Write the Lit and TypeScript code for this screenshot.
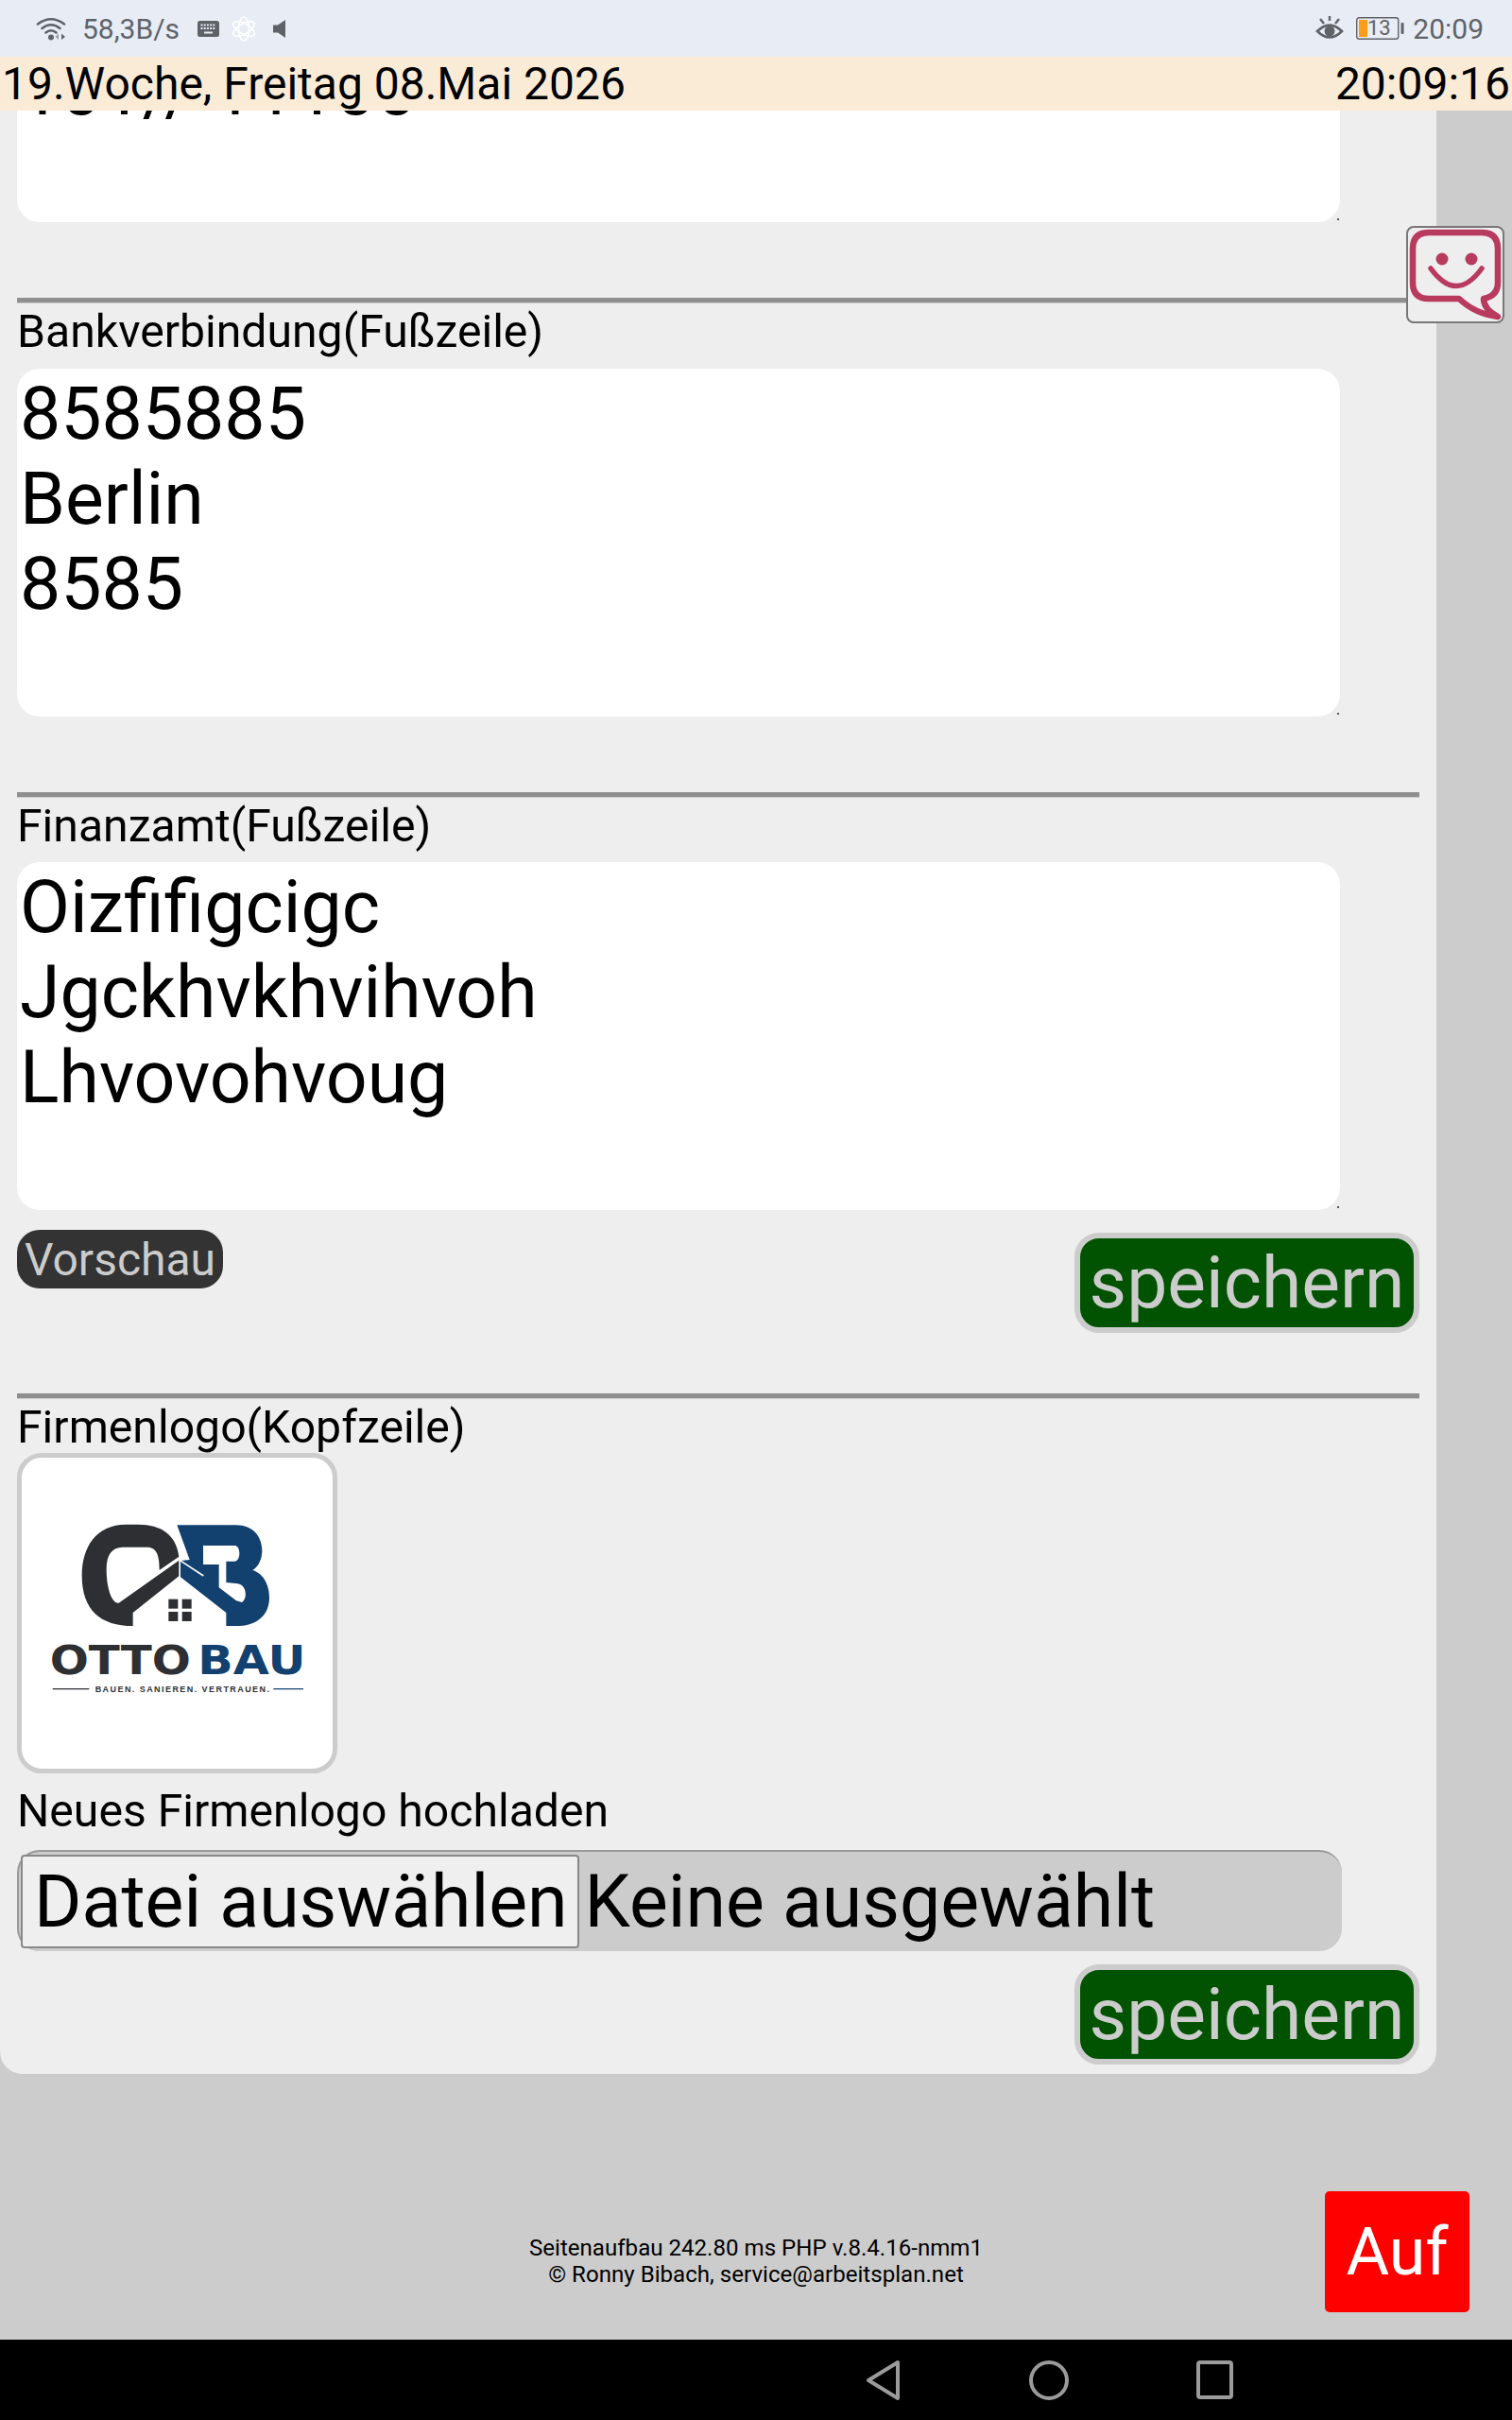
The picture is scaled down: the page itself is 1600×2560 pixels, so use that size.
import { LitElement, css, html, svg } from "lit";
import { customElement } from "lit/decorators.js";

const logo = svg`
  <g fill="#2e2f33">
    <path d="M478 200C470 130 420 98 350 98L310 98C215 98 170 170 170 260C170 370 230 420 332 420L332 378L478 262L478 212L287 347C265 350 248 300 248 240C248 195 265 170 300 170L375 170C405 170 416 190 416 243Z"/>
    <rect x="445" y="335" width="30" height="30"/>
    <rect x="488" y="335" width="30" height="30"/>
    <rect x="445" y="375" width="30" height="30"/>
    <rect x="488" y="375" width="30" height="30"/>
  </g>
  <g transform="translate(450 60)">
    <path fill="#12406f" fill-rule="evenodd" d="M22 40L210 40C270 40 292 85 292 120C292 150 280 172 262 183C300 195 315 235 315 270C315 330 270 360 215 360L178 360L178 318L33 205L33 153L62 150ZM105 105L105 165L155 165L155 238L210 280L228 285C245 275 245 232 215 226L178 222L178 155L205 155C225 155 225 105 205 105Z"/>
    <path stroke="#fff" stroke-width="5" fill="none" d="M30 151L106 201"/>
  </g>
  <text class="wordmark" x="68" y="572" fill="#2e2f33" textLength="448" lengthAdjust="spacingAndGlyphs">OTTO</text>
  <text class="wordmark" x="538" y="572" fill="#12406f" textLength="342" lengthAdjust="spacingAndGlyphs">BAU</text>
  <text class="tagline" x="212" y="630" fill="#2e2f33" textLength="553">BAUEN. SANIEREN. VERTRAUEN.</text>
  <path d="M77 620H193" stroke="#2e2f33" stroke-width="4"/>
  <path d="M778 620H873" stroke="#12406f" stroke-width="4"/>
`;

@customElement("app-root")
export class AppRoot extends LitElement {
  static override styles = css`
    :host {
      display: flex;
      flex-direction: column;
      height: 2560px;
      font-family: Roboto, sans-serif;
      color: #000;
      background: #ccc;
      overflow: hidden;
    }

    .status {
      height: 60px;
      flex: none;
      display: flex;
      align-items: center;
      justify-content: space-between;
      background: #e8ecf5;
      color: #5f6368;
      font-size: 30px;
      padding: 0 30px 0 38px;
    }
    .status-side {
      display: flex;
      align-items: center;
    }
    .status svg {
      display: block;
      flex: none;
    }
    .net {
      margin: 0 19px 0 17px;
    }
    .ai {
      margin: 0 17px 0 12px;
    }
    .eye {
      margin-right: 13px;
    }
    .battery {
      margin-right: 9px;
    }

    .datebar {
      height: 57px;
      flex: none;
      display: flex;
      justify-content: space-between;
      align-items: center;
      padding: 0 2px;
      background: #faebd7;
      font-size: 48px;
      line-height: 57px;
      position: relative;
      z-index: 2;
    }

    .main {
      flex: 1;
      min-height: 0;
      position: relative;
      overflow: hidden;
      display: flex;
      flex-direction: column;
    }

    .panel {
      width: 1520px;
      box-sizing: border-box;
      margin-top: -250px;
      padding: 0 18px 10px 18px;
      background: #eee;
      border-radius: 0 0 24px 24px;
      flex: none;
    }

    .rule {
      height: 6px;
      background: #8f8f8f;
      border-bottom: 1px solid #ccc;
      box-sizing: border-box;
      margin-top: 80px;
    }

    .label {
      font-size: 48.15px;
      line-height: 60px;
      margin-bottom: 8.6px;
    }
    .label-logo {
      margin-bottom: -3px;
    }
    .label-upload {
      margin-bottom: 11px;
    }

    .area {
      position: relative;
      width: 1400px;
      height: 368px;
    }
    .area::after {
      content: "";
      position: absolute;
      right: 1px;
      bottom: 2px;
      width: 2px;
      height: 2px;
      background: #555;
    }
    textarea {
      display: block;
      width: 100%;
      height: 100%;
      box-sizing: border-box;
      border: none;
      outline: none;
      resize: none;
      overflow: hidden;
      padding: 3px 3px;
      border-radius: 24px;
      background: #fff;
      color: #000;
      font: 77px Roboto, sans-serif;
    }

    .actions {
      display: flex;
      justify-content: space-between;
      align-items: flex-start;
      margin-top: 21px;
    }
    .preview {
      height: 62px;
      box-sizing: border-box;
      padding: 0 8px;
      border: none;
      border-radius: 24px;
      background: #333;
      color: #ccc;
      font: 48px/64px Roboto, sans-serif;
    }
    .save {
      display: block;
      height: 106px;
      width: 365px;
      box-sizing: border-box;
      padding: 0;
      border: 6px solid #ccc;
      border-radius: 26px;
      background: #015301;
      color: #ccc;
      font: 76.8px/86px Roboto, sans-serif;
      text-align: center;
    }
    .actions .save {
      margin-top: 3px;
    }
    .save-row {
      display: flex;
      justify-content: flex-end;
      margin-top: 14px;
    }
    .actions + .rule {
      margin-top: 64px;
    }

    .logo {
      width: 339px;
      height: 339px;
      box-sizing: border-box;
      margin-bottom: 10px;
      border: 5px solid #ccc;
      border-radius: 26px;
      background: #fff;
      overflow: hidden;
    }
    .logo svg {
      display: block;
      width: 100%;
      height: 100%;
    }
    .wordmark {
      font: bold 129px "DejaVu Sans", sans-serif;
    }
    .tagline {
      font: bold 27px "Liberation Sans", sans-serif;
    }

    .file {
      width: 1402px;
      height: 107px;
      box-sizing: border-box;
      display: flex;
      align-items: center;
      gap: 6px;
      padding-left: 2px;
      border-top: 2px solid #999;
      border-left: 2px solid #999;
      border-radius: 24px;
      background: #ccc;
      font-size: 77px;
    }
    .file button {
      height: 99px;
      padding: 0 10px 0 12px;
      border: 2px solid #888;
      border-radius: 4px;
      background: #efefef;
      color: #000;
      font: 77px Roboto, sans-serif;
    }

    .footer {
      flex: 1;
      display: flex;
      flex-direction: column;
      justify-content: flex-end;
      padding-bottom: 55px;
      font-size: 24.1px;
      line-height: 28px;
      text-align: center;
    }

    .top {
      position: absolute;
      right: 45px;
      bottom: 29px;
      width: 153px;
      height: 128px;
      padding: 0;
      border: none;
      border-radius: 5px;
      background: #f00;
      color: #fff;
      font: 70px Roboto, sans-serif;
    }

    .chat {
      position: absolute;
      top: 122px;
      left: 1488px;
      width: 104px;
      height: 103px;
      box-sizing: border-box;
      border: 2px solid #777;
      border-radius: 8px;
      background: #eee;
    }
    .chat svg {
      display: block;
      width: 100%;
      height: 100%;
    }

    .nav {
      height: 85px;
      flex: none;
      background: #000;
      display: flex;
      align-items: center;
      justify-content: center;
      gap: 134px;
      padding-left: 620px;
      box-sizing: border-box;
    }
    .nav svg {
      display: block;
    }
    .nav-shape {
      fill: none;
      stroke: #9b9b9b;
      stroke-width: 4;
      stroke-linejoin: round;
    }
  `;

  private areas = [
    "\n\n101// 11100",
    "8585885\nBerlin\n8585",
    "Oizfifigcigc\nJgckhvkhvihvoh\nLhvovohvoug",
  ];

  override render() {
    return html`
      <div class="status">
        <div class="status-side">
          <svg width="32" height="26" viewBox="0 0 32 26">
            <g fill="none" stroke="#5f6368" stroke-width="2.6" stroke-linecap="round">
              <path d="M2 8.5Q16 -2 30 8.5"/>
              <path d="M6.5 13Q16 5.5 25.5 13"/>
              <path d="M10.5 17.5Q16 13 21.5 17.5"/>
            </g>
            <circle cx="16" cy="22.5" r="3" fill="#5f6368"/>
            <path d="M24 18.5V25L20.5 22Z" fill="#9aa0a6"/>
            <path d="M27 18.5V25L31 22Z" fill="#5f6368"/>
          </svg>
          <span class="net">58,3B/s</span>
          <svg width="23" height="17" viewBox="0 0 23 17">
            <rect width="23" height="17" rx="2.5" fill="#5f6368"/>
            <path d="M3.5 4.5H19.5M3.5 8H19.5" stroke="#e8ecf5" stroke-width="2" stroke-dasharray="2 1.2"/>
            <path d="M7 12.5H16" stroke="#e8ecf5" stroke-width="2"/>
          </svg>
          <svg class="ai" width="28" height="27" viewBox="0 0 28 27">
            <g fill="none" stroke="#fff" stroke-width="1.6">
              <ellipse cx="14" cy="13.5" rx="5.5" ry="12.5"/>
              <ellipse cx="14" cy="13.5" rx="5.5" ry="12.5" transform="rotate(60 14 13.5)"/>
              <ellipse cx="14" cy="13.5" rx="5.5" ry="12.5" transform="rotate(120 14 13.5)"/>
            </g>
          </svg>
          <svg width="13" height="19" viewBox="0 0 13 19">
            <path d="M13 0V19L5 13.5H0V5.5H5Z" fill="#5f6368"/>
          </svg>
        </div>
        <div class="status-side">
          <svg class="eye" width="30" height="26" viewBox="0 0 30 26">
            <path d="M2 16Q15 3 28 16Q15 29 2 16Z" fill="none" stroke="#5f6368" stroke-width="2.6"/>
            <circle cx="15" cy="16" r="5.5" fill="#5f6368"/>
            <path d="M5 3L9 8M15 0V5M25 3L21 8" stroke="#5f6368" stroke-width="2.4"/>
          </svg>
          <svg class="battery" width="51" height="24" viewBox="0 0 51 24">
            <rect x="0.7" y="0.7" width="44" height="22.6" rx="2.5" fill="none" stroke="#5f6368" stroke-width="1.4"/>
            <rect x="3" y="3" width="9" height="18" fill="#ff9d17"/>
            <rect x="47.5" y="6" width="3" height="12" rx="1" fill="#5f6368"/>
            <text x="12" y="19" font-family="Roboto" font-size="22" fill="#5f6368">13</text>
          </svg>
          <span>20:09</span>
        </div>
      </div>

      <div class="datebar">
        <span>19.Woche, Freitag 08.Mai 2026</span>
        <span>20:09:16</span>
      </div>

      <div class="main">
        <div class="panel">
          ${this.renderArea(this.areas[0])}
          <div class="rule"></div>
          <div class="label">Bankverbindung(Fußzeile)</div>
          ${this.renderArea(this.areas[1])}
          <div class="rule"></div>
          <div class="label">Finanzamt(Fußzeile)</div>
          ${this.renderArea(this.areas[2])}
          <div class="actions">
            <button class="preview">Vorschau</button>
            <button class="save">speichern</button>
          </div>
          <div class="rule"></div>
          <div class="label label-logo">Firmenlogo(Kopfzeile)</div>
          <div class="logo">
            <svg viewBox="-21 -114 987 987">${logo}</svg>
          </div>
          <div class="label label-upload">Neues Firmenlogo hochladen</div>
          <div class="file">
            <button>Datei auswählen</button>
            <span>Keine ausgewählt</span>
          </div>
          <div class="save-row"><button class="save">speichern</button></div>
        </div>

        <div class="footer">
          <div>Seitenaufbau 242.80 ms PHP v.8.4.16-nmm1</div>
          <div>© Ronny Bibach, service@arbeitsplan.net</div>
        </div>

        <div class="chat">
          <svg viewBox="0 0 100 99">
            <path d="M22 5H78Q95 5 95 22V58Q95 72 80 75Q80 86 95 94Q71 91 54 75H22Q5 75 5 58V22Q5 5 22 5Z" fill="none" stroke="#b93a5f" stroke-width="6.5" stroke-linejoin="round"/>
            <circle cx="36" cy="33" r="6.5" fill="#b93a5f"/>
            <circle cx="67" cy="33" r="6.5" fill="#b93a5f"/>
            <path d="M24 43Q51 80 78 43" fill="none" stroke="#b93a5f" stroke-width="5.5" stroke-linecap="round"/>
          </svg>
        </div>
        <button class="top">Auf</button>
      </div>

      <div class="nav">
        <svg width="39" height="44" viewBox="0 0 39 44">
          <path class="nav-shape" d="M35 3V41L4 22Z"/>
        </svg>
        <svg width="44" height="44" viewBox="0 0 44 44">
          <circle class="nav-shape" cx="22" cy="22" r="19"/>
        </svg>
        <svg width="39" height="41" viewBox="0 0 39 41">
          <rect class="nav-shape" x="2" y="2" width="35" height="37" rx="2"/>
        </svg>
      </div>
    `;
  }

  private renderArea(text: string) {
    return html`<div class="area"><textarea rows="4" .value=${text}></textarea></div>`;
  }
}
